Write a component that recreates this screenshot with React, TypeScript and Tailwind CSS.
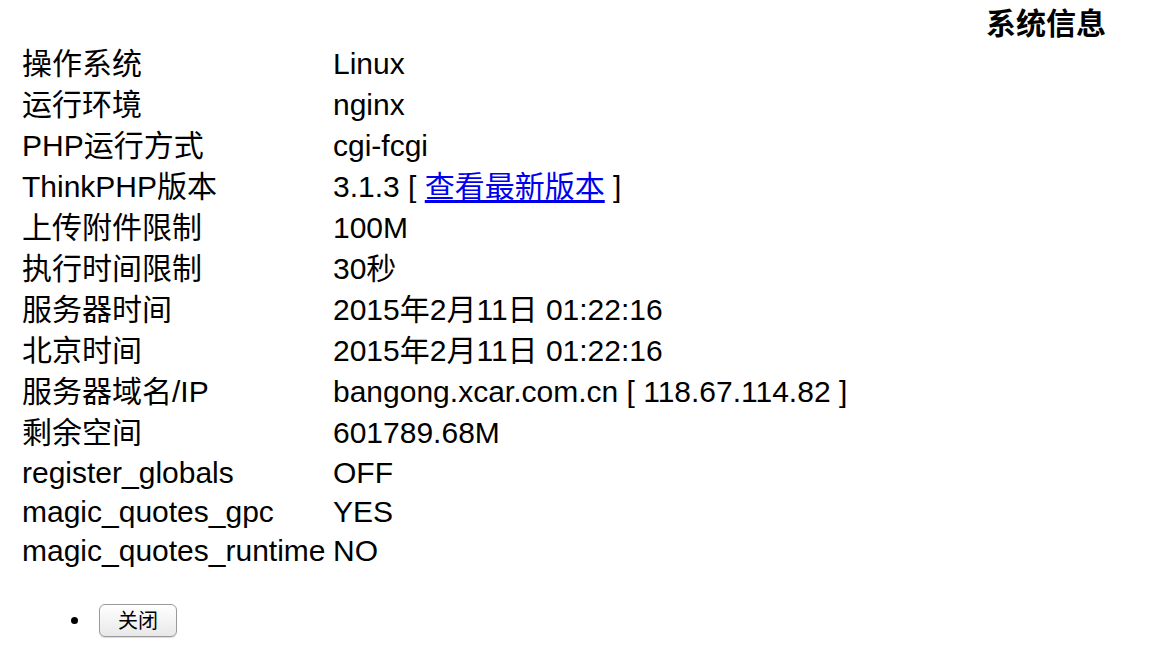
const rows: { label: string; value: React.ReactNode; cjk: boolean }[] = [
  { label: "操作系统", value: "Linux", cjk: true },
  { label: "运行环境", value: "nginx", cjk: true },
  { label: "PHP运行方式", value: "cgi-fcgi", cjk: true },
  {
    label: "ThinkPHP版本",
    value: (
      <>
        3.1.3 [{" "}
        <a href="#" className="text-[#0000ee] underline underline-offset-[3px]">
          查看最新版本
        </a>{" "}
        ]
      </>
    ),
    cjk: true,
  },
  { label: "上传附件限制", value: "100M", cjk: true },
  { label: "执行时间限制", value: "30秒", cjk: true },
  { label: "服务器时间", value: "2015年2月11日 01:22:16", cjk: true },
  { label: "北京时间", value: "2015年2月11日 01:22:16", cjk: true },
  { label: "服务器域名/IP", value: "bangong.xcar.com.cn [ 118.67.114.82 ]", cjk: true },
  { label: "剩余空间", value: "601789.68M", cjk: true },
  { label: "register_globals", value: "OFF", cjk: false },
  { label: "magic_quotes_gpc", value: "YES", cjk: false },
  { label: "magic_quotes_runtime", value: "NO", cjk: false },
];

export default function App() {
  return (
    <div
      className="min-h-screen bg-white text-black text-[30px]"
      style={{ fontFamily: '"Liberation Sans", "Noto Sans CJK SC", sans-serif' }}
    >
      {/* header */}
      <div className="flex justify-end pr-[44px] pt-[4px] h-[43px] items-center font-bold leading-[40px]">
        系统信息
      </div>

      {/* info table */}
      <div className="flex flex-col pl-[22px]">
        {rows.map((row, i) => (
          <div
            key={i}
            className={`flex items-center whitespace-nowrap ${
              row.cjk ? "h-[41px] leading-[41px]" : "h-[39px] leading-[39px]"
            }`}
          >
            <div className="w-[311px] shrink-0">{row.label}</div>
            <div>{row.value}</div>
          </div>
        ))}
      </div>

      {/* actions */}
      <ul className="mt-[34px] pl-[71px]">
        <li className="flex items-center gap-[21px]">
          <span className="w-[7px] h-[7px] rounded-full bg-black" />
          <button className="w-[78px] h-[33px] rounded-[6px] border border-[#9a9a9a] bg-gradient-to-b from-white to-[#e8e8e8] text-[20px] leading-none shadow-[0_1px_1px_rgba(0,0,0,0.15)]">
            关闭
          </button>
        </li>
      </ul>
    </div>
  );
}
